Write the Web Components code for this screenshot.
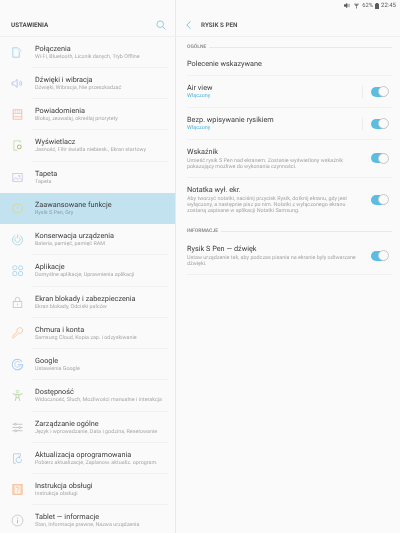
<!DOCTYPE html>
<html lang="pl">
<head>
<meta charset="utf-8">
<title>Ustawienia</title>
<style>
  html, body { margin: 0; height: 100%; background: #fafafa; }
  body { font-family: Roboto, "Noto Sans", sans-serif; overflow: hidden; text-rendering: geometricPrecision; }
</style>
</head>
<body>
<settings-app>
  <settings-nav slot="nav" title-text="USTAWIENIA">
    <nav-row label="Połączenia" sub="Wi-Fi, Bluetooth, Licznik danych, Tryb Offline" icon="conn"></nav-row>
    <nav-row label="Dźwięki i wibracja" sub="Dźwięki, Wibracja, Nie przeszkadzać" icon="sound"></nav-row>
    <nav-row label="Powiadomienia" sub="Blokuj, zezwalaj, określaj priorytety" icon="notif"></nav-row>
    <nav-row label="Wyświetlacz" sub="Jasność, Filtr światła niebiesk., Ekran startowy" icon="display"></nav-row>
    <nav-row label="Tapeta" sub="Tapeta" icon="wall" last></nav-row>
    <nav-row label="Zaawansowane funkcje" sub="Rysik S Pen, Gry" icon="adv" selected last></nav-row>
    <nav-row label="Konserwacja urządzenia" sub="Bateria, pamięć, pamięć RAM" icon="care"></nav-row>
    <nav-row label="Aplikacje" sub="Domyślne aplikacje, Uprawnienia aplikacji" icon="apps"></nav-row>
    <nav-row label="Ekran blokady i zabezpieczenia" sub="Ekran blokady, Odciski palców" icon="lock"></nav-row>
    <nav-row label="Chmura i konta" sub="Samsung Cloud, Kopia zap. i odzyskiwanie" icon="key"></nav-row>
    <nav-row label="Google" sub="Ustawienia Google" icon="google"></nav-row>
    <nav-row label="Dostępność" sub="Widoczność, Słuch, Możliwości manualne i interakcja" icon="access"></nav-row>
    <nav-row label="Zarządzanie ogólne" sub="Język i wprowadzanie, Data i godzina, Resetowanie" icon="general"></nav-row>
    <nav-row label="Aktualizacja oprogramowania" sub="Pobierz aktualizacje, Zaplanow. aktualiz. oprogram." icon="update"></nav-row>
    <nav-row label="Instrukcja obsługi" sub="Instrukcja obsługi" icon="manual"></nav-row>
    <nav-row label="Tablet — informacje" sub="Stan, Informacje prawne, Nazwa urządzenia" icon="info" last></nav-row>
  </settings-nav>
  <status-bar slot="status"></status-bar>
  <detail-pane slot="detail" title-text="RYSIK S PEN">
    <section-label text="OGÓLNE"></section-label>
    <pref-row label="Polecenie wskazywane" compact></pref-row>
    <pref-row label="Air view" state="Włączony" toggle divided></pref-row>
    <pref-row label="Bezp. wpisywanie rysikiem" state="Włączony" toggle divided></pref-row>
    <pref-row label="Wskaźnik" toggle>Umieść rysik S Pen nad ekranem. Zostanie wyświetlony wskaźnik pokazujący możliwe do wykonania czynności.</pref-row>
    <pref-row label="Notatka wył. ekr." toggle last>Aby tworzyć notatki, naciśnij przycisk Rysik, dotknij ekranu, gdy jest wyłączony, a następnie pisz po nim. Notatki z wyłączonego ekranu zostaną zapisane w aplikacji Notatki Samsung.</pref-row>
    <section-label text="INFORMACJE"></section-label>
    <pref-row label="Rysik S Pen — dźwięk" toggle>Ustaw urządzenie tak, aby podczas pisania na ekranie były odtwarzane dźwięki.</pref-row>
  </detail-pane>
</settings-app>

<script>
const ICONS = {
  conn: `<g stroke="#8cc8e4"><path d="M9.500 2.500H2.500v13h9V8"/><path d="M9 5.500a2.500 2.500 0 0 1 2.500 2M9 3a5 5 0 0 1 5 5" stroke="#b4d9ea"/></g>`,
  sound: `<g stroke="#a9b5ec"><path d="M1.500 7h3l4-3.500v11l-4-3.500h-3z"/><path d="M11 6.500a3 3 0 0 1 0 5M13 5a5.500 5.500 0 0 1 0 8"/></g>`,
  notif: `<g stroke="#f4bdab"><rect x="3" y="2.500" width="12" height="13" stroke-width="1.300"/><path d="M3 7.500h12M3 12h12" stroke-width="1.100"/><path d="M6 3v4M9 3v4M12 3v4" stroke-width=".8"/></g>`,
  display: `<g stroke="#b2d5a0"><path d="M13 5V2.500H4v13h5"/><circle cx="11.500" cy="11" r="2.600" stroke="#afc07c" stroke-width="1.400"/></g>`,
  wall: `<g stroke="#c9bbe6"><rect x="2.500" y="3.500" width="13" height="11"/><path d="M3 13l3.500-4 3 3 2.500-2.500 3 3"/><circle cx="11.500" cy="6.800" r="1"/></g>`,
  adv: `<g stroke="#dcd384"><path d="M9 2l2 1.600 2.600-.3.7 2.500 2 1.700-1 2.400.3 2.600-2.500.7-1.700 2-2.400-1-2.400 1-1.700-2-2.500-.7.3-2.600-1-2.400 2-1.700.7-2.500 2.600.3z"/><path d="M9 6v3.500" stroke-width="1.200"/></g>`,
  care: `<g stroke="#96d0da"><path d="M6 3.200a7 7 0 1 0 6 0"/><path d="M7 6.200a3.600 3.600 0 1 0 4 0M9 2v5" /></g>`,
  apps: `<g stroke="#96cde7"><rect x="2.500" y="2.500" width="5.500" height="5.500" rx="2.200"/><rect x="10.500" y="2.500" width="5.500" height="5.500" rx="2.200"/><rect x="2.500" y="10.500" width="5.500" height="5.500" rx="1.600"/><rect x="10.500" y="10.500" width="5.500" height="5.500" rx="1.600"/></g>`,
  lock: `<g stroke="#bcb6ec"><rect x="3" y="7.500" width="12" height="8.500"/><path d="M5.800 7.500V5a3.200 3.200 0 0 1 6.400 0v2.500M9 10.500v2.500"/></g>`,
  key: `<g stroke="#f7c8a4" stroke-width="1.300"><path d="M10.500 8.500L3 15.500l-1-2 1.500-1.200-.7-1 1.500-.3L8.500 6.500"/><path d="M8.500 6.500a4 4 0 1 1 2 2"/></g>`,
  google: `<g stroke="#a6c9f4" stroke-width="1.400"><path d="M15 5A7.300 7.300 0 1 0 16.200 9.500H9.500"/><path d="M12.600 6.600A4 4 0 1 0 13 10" stroke-width="1"/></g>`,
  access: `<g stroke="#b4d5a2"><circle cx="9" cy="3.600" r="1.800"/><path d="M2 6.500l5 1.200h4l5-1.200M7 8v4l-1.200 4.500M11 8v4l1.200 4.500M7 12h4" stroke-width="1.300"/></g>`,
  general: `<g stroke="#b2b2b2"><path d="M2 4.500h14M2 9h14M2 13.500h14"/><circle cx="6" cy="4.500" r="1.300" fill="#fafafa"/><circle cx="12" cy="9" r="1.300" fill="#fafafa"/><circle cx="6.500" cy="13.500" r="1.300" fill="#fafafa"/></g>`,
  update: `<g stroke="#a0c6f3"><path d="M13 6V2.500H3.500v13h3.500"/><path d="M14.500 10a3.800 3.800 0 1 1-2.500-2.600" stroke-width="1.200"/><path d="M11 5.500l2 1.800-2.200 1.400"/></g>`,
  manual: `<g><rect x="2.500" y="2" width="13" height="14" fill="#f8d0b0" stroke="#f5bd96"/><rect x="5" y="3.500" width="8" height="11" fill="#fbf3ea" stroke="none"/><path d="M7.200 7a1.800 1.800 0 1 1 2.600 1.600c-.6.4-.8.7-.8 1.400M9 11.500v1.200" stroke="#efb288" stroke-width="1.100"/></g>`,
  info: `<g stroke="#bcbcbc"><circle cx="9" cy="9" r="7.500"/><path d="M9 8v5M9 5v1.400" stroke="#a4a4a4"/></g>`
};

class SettingsApp extends HTMLElement {
  constructor() {
    super();
    this.attachShadow({ mode: 'open' });
    this.shadowRoot.innerHTML = `
      <style>
        :host { display: grid; grid-template-columns: 175px 1fr; grid-template-rows: 16px 1fr; width: 400px; height: 533px; overflow: hidden; background: #fafafa; filter: blur(.3px); }
        .nav { grid-column: 1; grid-row: 1 / 3; min-height: 0; padding-top: 16px; border-right: 1px solid #e8e8e8; box-sizing: border-box; width: 176px; }
        .status { grid-column: 2; grid-row: 1; }
        .detail { grid-column: 2; grid-row: 2; min-height: 0; }
      </style>
      <div class="nav"><slot name="nav"></slot></div>
      <div class="status"><slot name="status"></slot></div>
      <div class="detail"><slot name="detail"></slot></div>
    `;
  }
}

class StatusBar extends HTMLElement {
  constructor() {
    super();
    this.attachShadow({ mode: 'open' });
    this.shadowRoot.innerHTML = `
      <style>
        :host { display: flex; align-items: center; justify-content: flex-end; gap: 2px; height: 11px; padding-right: 4px; color: #5c5c5c; font-size: 5.800px; }
        svg { display: block; }
      </style>
      <svg width="6" height="7" viewBox="0 0 7 7"><path d="M0 2.500h1.500L3.500 1v5L1.500 4.500H0zM4.500 2v3M6 1.500v4" stroke="#5c5c5c" fill="#5c5c5c" stroke-width=".7"/></svg>
      <svg width="5" height="7" viewBox="0 0 6 7" style="margin-left:2px"><path d="M0 1.500h6L5.300 2.500H.7zM1.300 3h3.400l-.7 1H2zM2.500 4.500h1V7h-1z" fill="#6a6a6a"/></svg>
      <span style="margin-left:1px">62%</span>
      <svg width="4" height="6" viewBox="0 0 4 6"><path d="M1 0h2v.7h1V6H0V.7h1z" fill="#5c5c5c"/></svg>
      <span style="font-size:6px">22:45</span>
    `;
  }
}

class SettingsNav extends HTMLElement {
  constructor() {
    super();
    this.attachShadow({ mode: 'open' });
    this.shadowRoot.innerHTML = `
      <style>
        :host { display: block; }
        header { display: flex; align-items: center; justify-content: space-between; height: 20.500px; padding: 0 9px 1px 11px; border-bottom: 1px solid #efefef; box-sizing: border-box; }
        h1 { margin: 0; font-size: 6.300px; font-weight: 700; color: #4a4a4a; }
        svg { display: block; }
      </style>
      <header>
        <h1></h1>
        <svg width="10" height="10" viewBox="0 0 10 10" fill="none" stroke="#7cc0dc"><circle cx="4.200" cy="4.200" r="3.300" stroke-width=".8"/><path d="M6.700 6.700L9.500 9.500" stroke-width=".8"/></svg>
      </header>
      <slot></slot>
    `;
    this.shadowRoot.querySelector('h1').textContent = this.getAttribute('title-text');
  }
}

class NavRow extends HTMLElement {
  constructor() {
    super();
    this.attachShadow({ mode: 'open' });
    this.shadowRoot.innerHTML = `
      <style>
        :host { display: block; height: 31.250px; box-sizing: border-box; color: #3d3d3d; }
        :host([selected]) { background: #c2e2f0; }
        .row { display: flex; align-items: center; height: 100%; padding-left: 11px; box-sizing: border-box; }
        svg { flex: none; width: 13px; height: 13px; margin-right: 8px; fill: none; stroke-width: 1; }
        .text { flex: 1; height: 100%; display: flex; flex-direction: column; justify-content: center; gap: 1px; padding-left: 3px; border-bottom: 1px solid #f0f0f0; box-sizing: border-box; margin-right: 7px; white-space: nowrap; }
        :host([last]) .text { border-bottom-color: transparent; }
        .label { font-size: 7.300px; line-height: 9px; }
        .sub { font-size: 5.400px; line-height: 6px; color: #a8a8a8; }
        :host([selected]) .sub { color: #8b9ea8; }
      </style>
      <div class="row">
        <svg viewBox="0 0 18 18"></svg>
        <div class="text"><div class="label"></div><div class="sub"></div></div>
      </div>
    `;
  }
  connectedCallback() {
    const root = this.shadowRoot;
    root.querySelector('svg').innerHTML = ICONS[this.getAttribute('icon')] || '';
    root.querySelector('.label').textContent = this.getAttribute('label');
    root.querySelector('.sub').textContent = this.getAttribute('sub');
  }
}

class DetailPane extends HTMLElement {
  constructor() {
    super();
    this.attachShadow({ mode: 'open' });
    this.shadowRoot.innerHTML = `
      <style>
        :host { display: block; }
        header { display: flex; align-items: center; height: 20.500px; padding: 0 0 1px 11px; border-bottom: 1px solid #efefef; box-sizing: border-box; }
        h1 { margin: 0 0 0 10px; font-size: 6.300px; font-weight: 700; color: #555; }
        svg { display: block; flex: none; }
        .body { padding: 4.500px 8px 0 12px; }
      </style>
      <header>
        <svg width="5" height="8" viewBox="0 0 5 8" fill="none" stroke="#6cb8dc" stroke-width=".9"><path d="M4.300 .5L.8 4l3.500 3.500"/></svg>
        <h1></h1>
      </header>
      <div class="body"><slot></slot></div>
    `;
    this.shadowRoot.querySelector('h1').textContent = this.getAttribute('title-text');
  }
}

class SectionLabel extends HTMLElement {
  constructor() {
    super();
    this.attachShadow({ mode: 'open' });
    this.shadowRoot.innerHTML = `
      <style>
        :host { display: flex; align-items: center; gap: 3px; height: 12px; font-size: 5px; font-weight: 700; color: #909090; }
        i { flex: 1; height: 1px; background: #e8e8e8; }
      </style>
      <span></span><i></i>
    `;
    this.shadowRoot.querySelector('span').textContent = this.getAttribute('text');
  }
}

class PrefRow extends HTMLElement {
  constructor() {
    super();
    this.attachShadow({ mode: 'open' });
    this.shadowRoot.innerHTML = `
      <style>
        :host { display: flex; align-items: center; min-height: 31px; padding: 7px 0; box-sizing: border-box; border-bottom: 1px solid #f0f0f0; }
        :host([compact]) { min-height: 23px; padding: 0; }
        :host([last]) { border-bottom: 0; margin-bottom: 4px; }
        .text { flex: 1; min-width: 0; }
        .label { font-size: 7.300px; line-height: 10px; color: #3d3d3d; }
        .state { font-size: 5.400px; line-height: 7px; color: #55b0dc; }
        .desc { font-size: 5.400px; line-height: 6.100px; color: #a4a4a4; margin-top: .8px; width: 172px; }
        .tog { flex: none; display: flex; align-items: center; }
        .tog[hidden] { display: none; }
        .rule { width: 1px; height: 13px; background: #ececec; margin-right: 8px; visibility: hidden; }
        :host([divided]) .rule { visibility: visible; }
        .track { position: relative; width: 17px; height: 10px; border-radius: 5px; background: #5cbde2; margin-right: 4px; }
        .knob { position: absolute; right: -.5px; top: -.5px; width: 11px; height: 11px; box-sizing: border-box; border-radius: 50%; background: #fafafa; border: .7px solid #c8c8c8; }
      </style>
      <div class="text">
        <div class="label"></div>
        <div class="state"></div>
        <div class="desc"><slot></slot></div>
      </div>
      <div class="tog"><span class="rule"></span><span class="track"><span class="knob"></span></span></div>
    `;
  }
  connectedCallback() {
    const root = this.shadowRoot;
    root.querySelector('.label').textContent = this.getAttribute('label');
    const state = root.querySelector('.state');
    if (this.hasAttribute('state')) state.textContent = this.getAttribute('state');
    else state.remove();
    root.querySelector('.tog').hidden = !this.hasAttribute('toggle');
    if (!this.textContent.trim()) root.querySelector('.desc').remove();
  }
}

customElements.define('settings-app', SettingsApp);
customElements.define('status-bar', StatusBar);
customElements.define('settings-nav', SettingsNav);
customElements.define('nav-row', NavRow);
customElements.define('detail-pane', DetailPane);
customElements.define('section-label', SectionLabel);
customElements.define('pref-row', PrefRow);
</script>
</body>
</html>
